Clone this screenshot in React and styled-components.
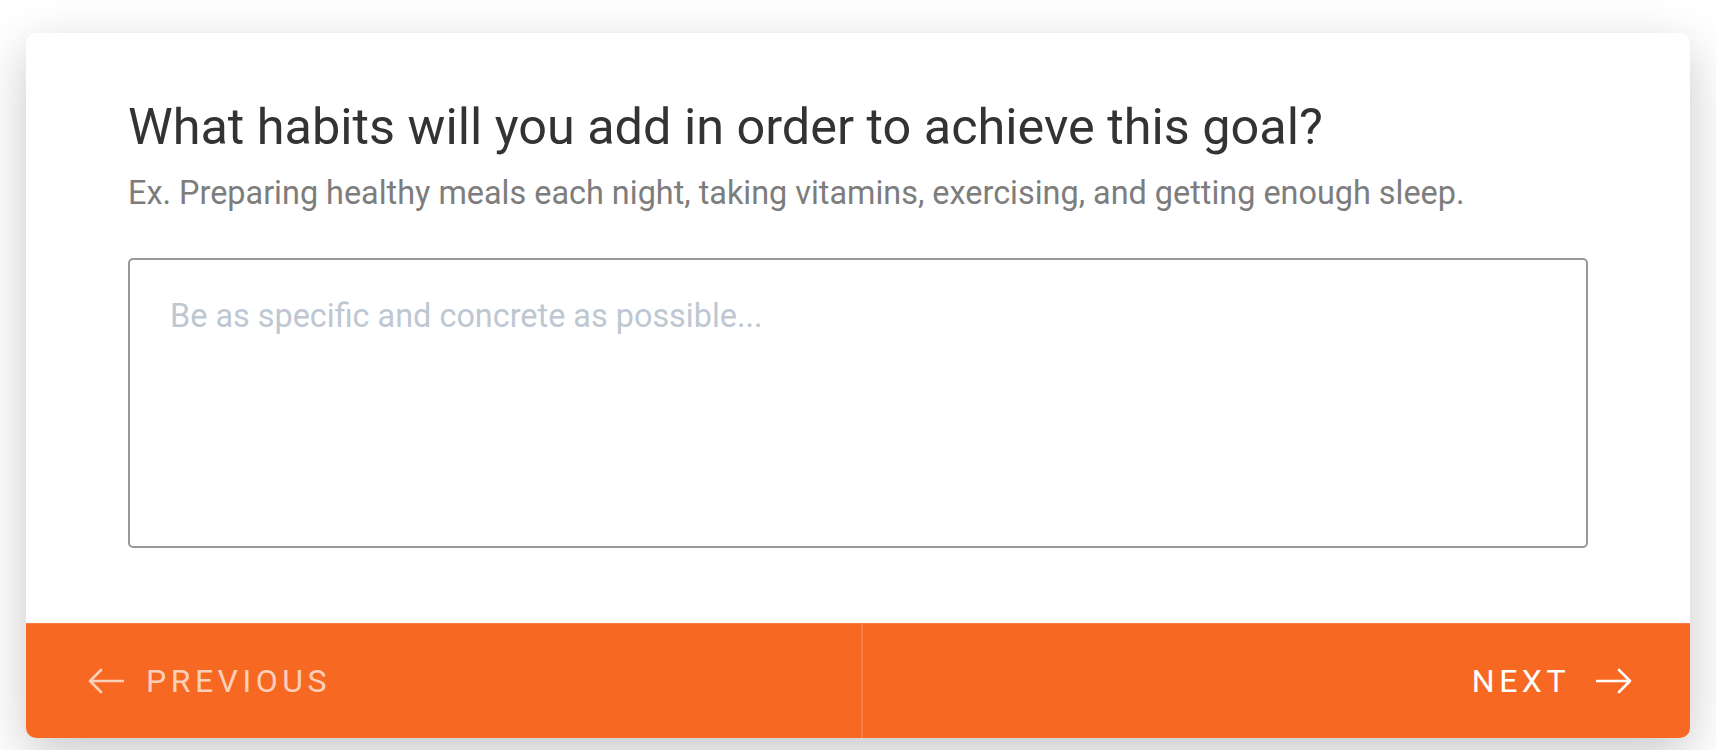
import React from "react";
import styled, { createGlobalStyle } from "styled-components";

const GlobalStyle = createGlobalStyle`
  html, body {
    margin: 0;
    padding: 0;
    background: #ffffff;
    font-family: Roboto, "Liberation Sans", sans-serif;
  }
`;

const Page = styled.div`
  padding: 33px 26px 40px;
`;

const Card = styled.div`
  background: #ffffff;
  border-radius: 10px;
  overflow: hidden;
  box-shadow: rgba(0, 0, 0, 0.22) 0px 16px 50px 0px;
`;

const Body = styled.div`
  padding: 64px 102px 75px;
`;

const Title = styled.h1`
  margin: 0;
  font-size: 50.4px;
  font-weight: 400;
  line-height: 60px;
  color: rgb(51, 51, 51);
`;

const Hint = styled.p`
  margin: 14px 0 42px;
  font-size: 32.4px;
  line-height: 45px;
  color: rgb(125, 125, 125);
`;

const Answer = styled.textarea`
  display: block;
  box-sizing: border-box;
  width: 100%;
  height: 290px;
  margin: 0;
  padding: 32px 40px;
  border: 2px solid rgb(153, 153, 153);
  border-radius: 5px;
  resize: none;
  outline: none;
  font-family: inherit;
  font-size: 32.4px;
  line-height: 48px;
  color: rgb(51, 51, 51);

  &::placeholder {
    color: rgb(190, 199, 210);
  }
`;

const Footer = styled.div`
  display: flex;
  height: 114px;
  background: rgb(247, 104, 35);
  border-top: 1px solid rgb(248, 124, 68);
`;

const NavButton = styled.button`
  flex: 1;
  display: flex;
  align-items: center;
  justify-content: ${(props) => (props.next ? "flex-end" : "flex-start")};
  gap: ${(props) => (props.next ? "26px" : "22px")};
  padding: 0 ${(props) => (props.next ? "58px" : "62px")};
  background: none;
  border: none;
  border-left: ${(props) => (props.next ? "2px solid rgb(249, 125, 69)" : "none")};
  font-family: inherit;
  font-size: 32px;
  font-weight: 400;
  letter-spacing: 4.5px;
  text-transform: uppercase;
  color: ${(props) => (props.next ? "#ffffff" : "rgba(255, 255, 255, 0.7)")};
  cursor: pointer;

  svg {
    flex-shrink: 0;
  }
`;

const Arrow = ({ direction }) => (
  <svg width="36" height="26" viewBox="0 0 36 26" fill="none">
    {direction === "left" ? (
      <path d="M35 13H2M13 2L2 13l11 11" stroke="currentColor" strokeWidth="2.6" strokeLinecap="round" strokeLinejoin="round" />
    ) : (
      <path d="M1 13h33M23 2l11 11-11 11" stroke="currentColor" strokeWidth="2.6" strokeLinecap="round" strokeLinejoin="round" />
    )}
  </svg>
);

const App = () => {
  return (
    <>
      <GlobalStyle />
      <Page>
        <Card>
          <Body>
            <Title>What habits will you add in order to achieve this goal?</Title>
            <Hint>
              Ex. Preparing healthy meals each night, taking vitamins, exercising, and getting enough sleep.
            </Hint>
            <Answer placeholder="Be as specific and concrete as possible..." />
          </Body>
          <Footer>
            <NavButton>
              <Arrow direction="left" />
              Previous
            </NavButton>
            <NavButton next>
              Next
              <Arrow direction="right" />
            </NavButton>
          </Footer>
        </Card>
      </Page>
    </>
  );
};

export default App;
